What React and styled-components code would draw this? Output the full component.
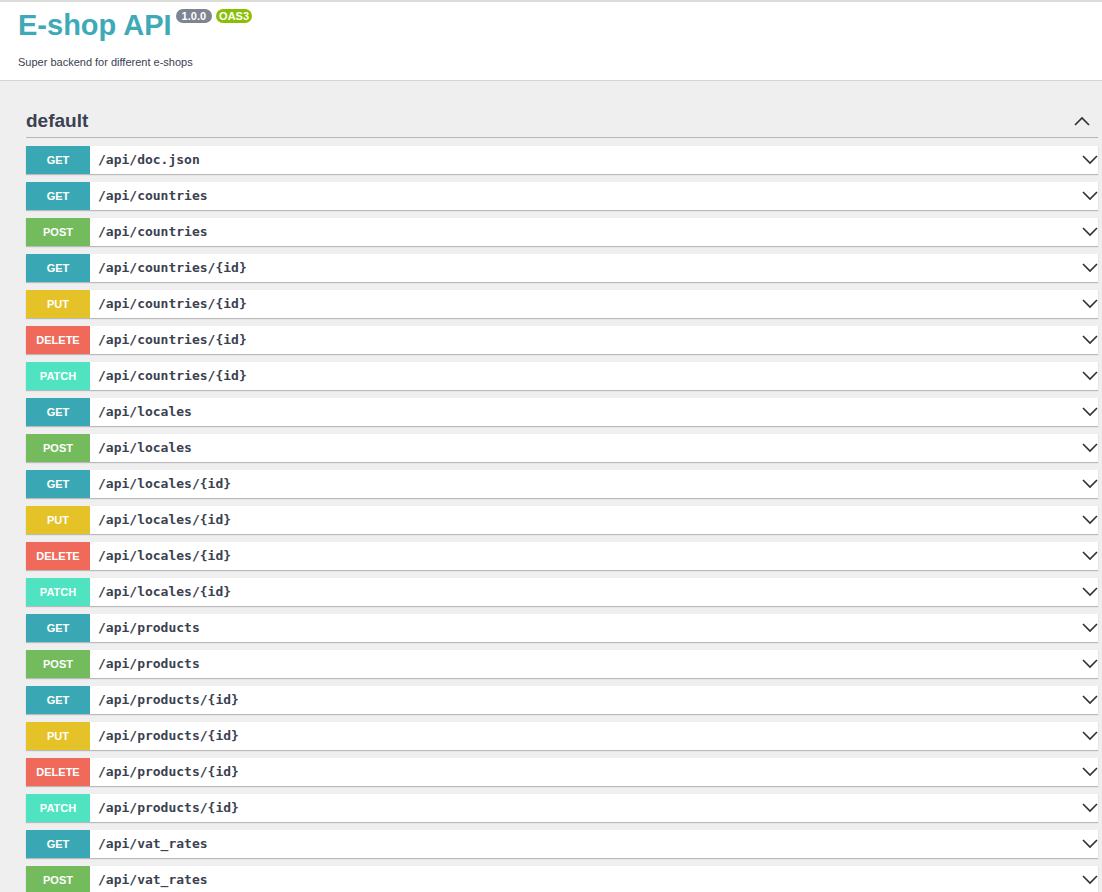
import React from 'react';
import styled, { createGlobalStyle } from 'styled-components';

const GlobalStyle = createGlobalStyle`
  html, body {
    margin: 0;
    padding: 0;
    background: #efefef;
    font-family: "Liberation Sans", Arial, sans-serif;
    color: #3b4151;
  }
`;

const methodColors = {
  GET: '#3aa8b4',
  POST: '#74bb5e',
  PUT: '#e6c229',
  DELETE: '#ef6a5a',
  PATCH: '#50e3c2'
};

const endpoints = [
  ['GET', '/api/doc.json'],
  ['GET', '/api/countries'],
  ['POST', '/api/countries'],
  ['GET', '/api/countries/{id}'],
  ['PUT', '/api/countries/{id}'],
  ['DELETE', '/api/countries/{id}'],
  ['PATCH', '/api/countries/{id}'],
  ['GET', '/api/locales'],
  ['POST', '/api/locales'],
  ['GET', '/api/locales/{id}'],
  ['PUT', '/api/locales/{id}'],
  ['DELETE', '/api/locales/{id}'],
  ['PATCH', '/api/locales/{id}'],
  ['GET', '/api/products'],
  ['POST', '/api/products'],
  ['GET', '/api/products/{id}'],
  ['PUT', '/api/products/{id}'],
  ['DELETE', '/api/products/{id}'],
  ['PATCH', '/api/products/{id}'],
  ['GET', '/api/vat_rates'],
  ['POST', '/api/vat_rates']
];

const Chevron = ({ up }) => (
  <svg width="16" height="10" viewBox="0 0 16 10">
    <path
      d={up ? 'M1 9 L8 2 L15 9' : 'M1 1 L8 8 L15 1'}
      fill="none"
      stroke="#303030"
      strokeWidth="1.6"
    />
  </svg>
);

const App = () => (
  <Page>
    <GlobalStyle />
    <Header>
      <TitleRow>
        <Title>E-shop API</Title>
        <Badge color="#7d8492" pad={6}>1.0.0</Badge>
        <Badge color="#89bf04" pad={3}>OAS3</Badge>
      </TitleRow>
      <Description>Super backend for different e-shops</Description>
    </Header>
    <Section>
      <TagHeader>
        <TagName>default</TagName>
        <Chevron up />
      </TagHeader>
      <List>
        {endpoints.map(([method, path], i) => (
          <Row key={i}>
            <Method color={methodColors[method]}>{method}</Method>
            <Path>{path}</Path>
            <Chevron />
          </Row>
        ))}
      </List>
    </Section>
  </Page>
);

export default App;

const Page = styled.div`
  min-height: 892px;
  border-top: 2px solid #dcdcdc;
`;

const Header = styled.header`
  background: #fff;
  border-bottom: 1px solid #d5d5d5;
  padding: 7px 18px 10px;
  height: 61px;
`;

const TitleRow = styled.div`
  display: flex;
  align-items: flex-start;
  gap: 4px;
`;

const Title = styled.h1`
  margin: 0;
  font-size: 29px;
  line-height: 33px;
  font-weight: 700;
  color: #3eaab7;
`;

const Badge = styled.span`
  background: ${p => p.color};
  color: #fff;
  font-size: 11px;
  font-weight: 700;
  line-height: 14px;
  padding: 0 ${p => p.pad}px;
  border-radius: 8px;
`;

const Description = styled.p`
  margin: 14px 0 0;
  font-size: 11px;
  line-height: 13px;
  color: #3b4151;
`;

const Section = styled.section`
  padding: 27px 4px 0 26px;
`;

const TagHeader = styled.div`
  display: flex;
  align-items: center;
  justify-content: space-between;
  padding: 0 8px 3px 0;
  border-bottom: 1px solid #b6b6b6;
`;

const TagName = styled.h3`
  margin: 0;
  font-size: 19px;
  line-height: 26px;
  font-weight: 700;
  color: #3b4151;
`;

const List = styled.div`
  display: flex;
  flex-direction: column;
  gap: 8px;
  padding-top: 8px;
`;

const Row = styled.div`
  display: flex;
  align-items: center;
  height: 28px;
  background: #fff;
  box-shadow: 0 1px 1px rgba(0, 0, 0, 0.22);
`;

const Method = styled.span`
  width: 64px;
  height: 100%;
  display: flex;
  align-items: center;
  justify-content: center;
  background: ${p => p.color};
  color: #fff;
  font-size: 11px;
  font-weight: 700;
`;

const Path = styled.span`
  flex: 1;
  padding-left: 8px;
  font-family: "DejaVu Sans Mono", monospace;
  font-size: 13px;
  font-weight: 700;
  color: #3b4151;
  padding-bottom: 1px;
`;
